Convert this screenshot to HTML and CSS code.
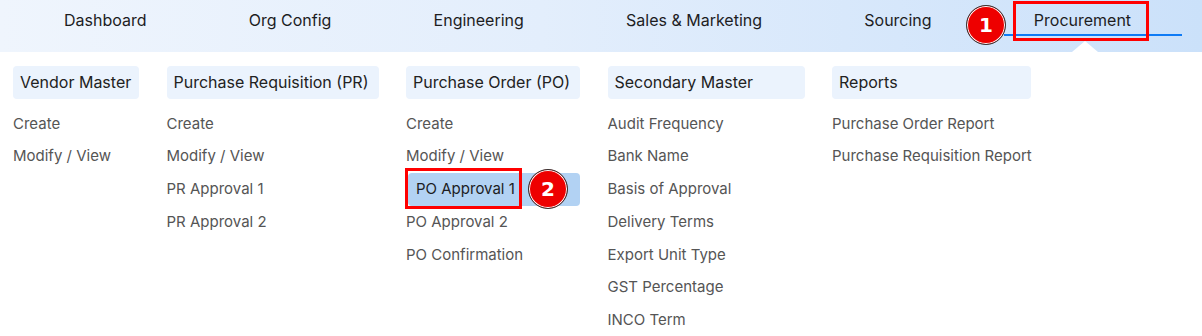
FILE: index.html
```html
<!DOCTYPE html>
<html lang="en">
<head>
    <meta charset="UTF-8">
    <meta name="viewport" content="width=device-width, initial-scale=1.0">
    <title>Procurement Menu</title>
    <link rel="stylesheet" href="styles.css">
</head>
<body>
    <header class="topbar">
        <nav class="main-nav">
            <a class="nav-item" href="#">Dashboard</a>
            <a class="nav-item" href="#">Org Config</a>
            <a class="nav-item" href="#">Engineering</a>
            <a class="nav-item" href="#">Sales &amp; Marketing</a>
            <a class="nav-item" href="#">Sourcing</a>
            <a class="nav-item active" href="#">Procurement<span class="caret"></span></a>
        </nav>
        <span class="step-badge step-one">1</span>
        <span class="mark-box mark-one"></span>
    </header>

    <main class="mega-menu">
        <section class="menu-col col-vendor">
            <h3 class="col-title">Vendor Master</h3>
            <ul>
                <li>Create</li>
                <li>Modify / View</li>
            </ul>
        </section>
        <section class="menu-col col-pr">
            <h3 class="col-title">Purchase Requisition (PR)</h3>
            <ul>
                <li>Create</li>
                <li>Modify / View</li>
                <li>PR Approval 1</li>
                <li>PR Approval 2</li>
            </ul>
        </section>
        <section class="menu-col col-po">
            <h3 class="col-title">Purchase Order (PO)</h3>
            <ul>
                <li>Create</li>
                <li>Modify / View</li>
                <li class="selected">PO Approval 1
                    <span class="mark-box mark-two"></span>
                    <span class="step-badge step-two">2</span>
                </li>
                <li>PO Approval 2</li>
                <li>PO Confirmation</li>
            </ul>
        </section>
        <section class="menu-col col-secondary">
            <h3 class="col-title">Secondary Master</h3>
            <ul>
                <li>Audit Frequency</li>
                <li>Bank Name</li>
                <li>Basis of Approval</li>
                <li>Delivery Terms</li>
                <li>Export Unit Type</li>
                <li>GST Percentage</li>
                <li>INCO Term</li>
            </ul>
        </section>
        <section class="menu-col col-reports">
            <h3 class="col-title">Reports</h3>
            <ul>
                <li>Purchase Order Report</li>
                <li>Purchase Requisition Report</li>
            </ul>
        </section>
    </main>
</body>
</html>
```

FILE: styles.css
```css
body {
    margin: 0;
    font-family: Inter, "Noto Sans", sans-serif;
    background: #fff;
    color: #222;
}

/* top navigation */
.topbar {
    position: relative;
    height: 52px;
    background: linear-gradient(90deg, #eff5fd 0%, #e3eefc 45%, #cbe1fa 100%);
}

.main-nav {
    display: flex;
    align-items: flex-start;
    gap: 21.2px;
    padding-left: 34px;
}

.nav-item {
    position: relative;
    display: block;
    height: 36px;
    box-sizing: border-box;
    padding: 8px 51px 0 30px;
    line-height: 24px;
    font-size: 16px;
    color: #1d1d1f;
    text-decoration: none;
    white-space: nowrap;
    border-bottom: 2px solid transparent;
}

.nav-item.active {
    border-bottom-color: #0f7bf5;
}

.caret {
    position: absolute;
    top: 41px;
    left: 68px;
    width: 0;
    height: 0;
    border-left: 13px solid transparent;
    border-right: 13px solid transparent;
    border-bottom: 11px solid #fff;
}

/* annotation marks */
.step-badge {
    position: absolute;
    width: 38px;
    height: 38px;
    border-radius: 50%;
    background: #ee0000;
    border: 1px solid #333;
    box-shadow: 0 0 0 1px #fff inset;
    color: #fff;
    font-weight: 700;
    font-size: 20px;
    line-height: 38px;
    text-align: center;
    font-family: "DejaVu Sans", sans-serif;
}

.step-one {
    left: 966px;
    top: 5px;
}

.mark-box {
    position: absolute;
    border: 3px solid #ff0000;
    box-sizing: border-box;
}

.mark-one {
    left: 1013px;
    top: 1px;
    width: 136px;
    height: 40px;
}

/* dropdown */
.mega-menu {
    display: flex;
    gap: 27.5px;
    padding: 14px 0 0 13px;
}

.menu-col ul {
    list-style: none;
    margin: 8.2px 0 0;
    padding: 0;
}

.col-vendor { width: 126px; }
.col-pr { width: 212px; }
.col-po { width: 174px; }
.col-secondary { width: 197px; }
.col-reports { width: 199px; }

.col-title {
    margin: 0;
    height: 33px;
    line-height: 33px;
    padding: 0 7px;
    font-size: 16px;
    font-weight: 400;
    color: #222;
    background: #ebf3fd;
    border-radius: 4px;
    white-space: nowrap;
}

.menu-col li {
    position: relative;
    line-height: 20px;
    padding: 6.4px 0;
    font-size: 15px;
    color: #555;
    white-space: nowrap;
}

.menu-col li.selected {
    margin-left: 2px;
    padding-left: 8px;
    color: #1d1d1f;
    background: #b2d2f3;
    border-radius: 4px;
}

.mark-two {
    left: -3px;
    top: -5px;
    width: 117px;
    height: 41px;
}

.step-two {
    left: 120px;
    top: -4px;
}
```
